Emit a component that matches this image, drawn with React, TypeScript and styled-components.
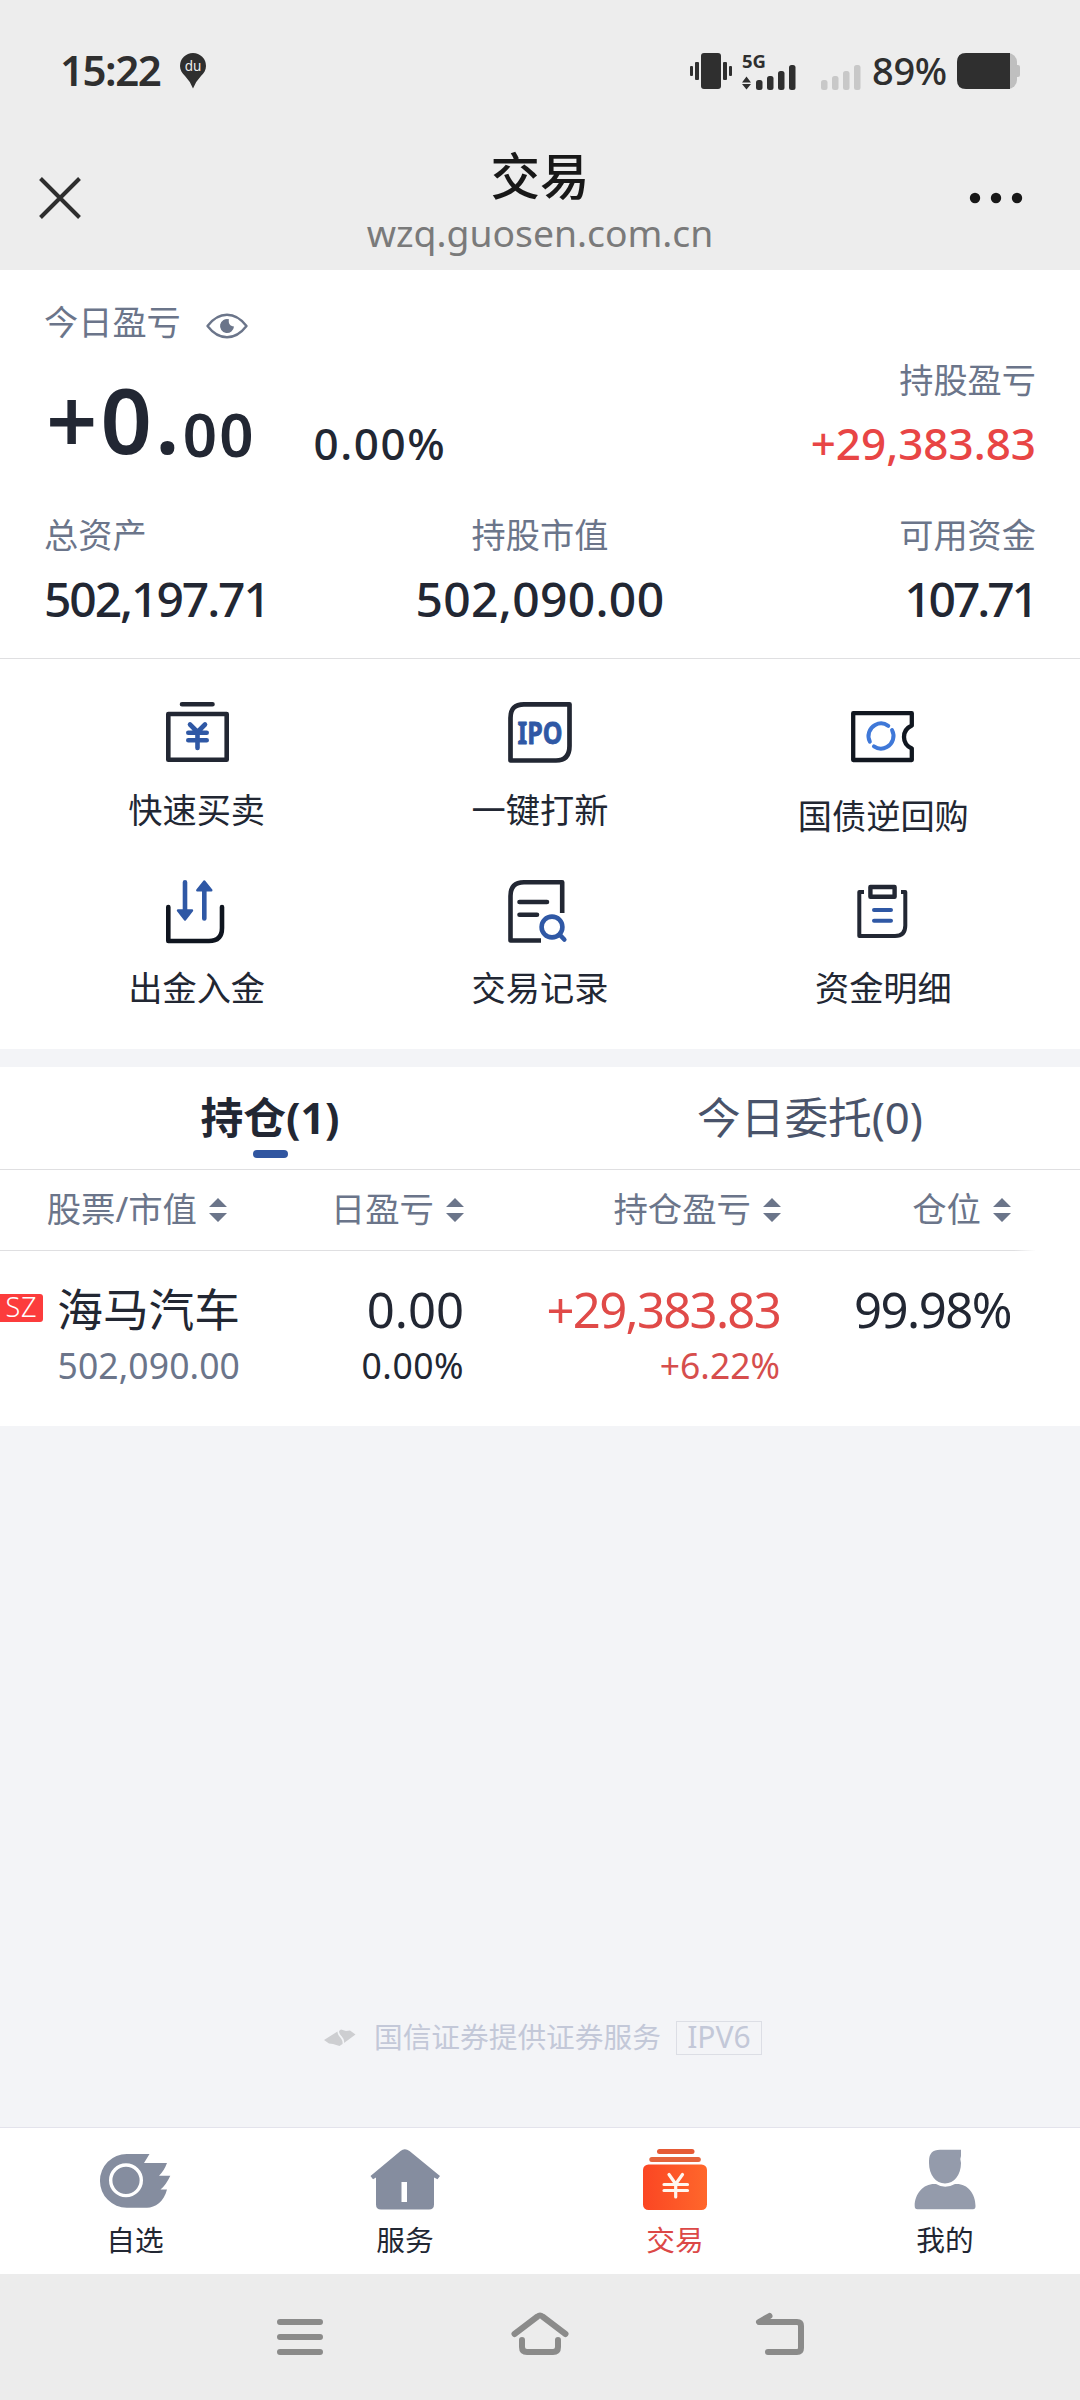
import styled, { createGlobalStyle } from "styled-components";
import type { ReactNode } from "react";

const INK = "#222733";
const MUTED = "#6b758a";
const BLUE = "#2f58a5";
const RED = "#e84545";
const GREY = "#858d9f";

const App = () => {
  return (
    <>
      <GlobalStyle />
      <Page>
        <StatusBar />
        <TitleBar>
          <CloseIcon />
          <TitleBox>
            <Title>交易</Title>
            <Url>wzq.guosen.com.cn</Url>
          </TitleBox>
          <MoreIcon />
        </TitleBar>

        <Summary>
          <TodayLabel>
            今日盈亏
            <EyeIcon />
          </TodayLabel>
          <ProfitRow>
            <BigProfit>+0.</BigProfit>
            <SmallProfit>00</SmallProfit>
            <Percent>0.00%</Percent>
            <HoldProfit>
              <Label>持股盈亏</Label>
              <RedValue>+29,383.83</RedValue>
            </HoldProfit>
          </ProfitRow>
          <AssetRow>
            {assets.map((item) => (
              <Asset key={item.label} $align={item.align}>
                <Label>{item.label}</Label>
                <AssetValue $spacing={item.spacing}>{item.value}</AssetValue>
              </Asset>
            ))}
          </AssetRow>
        </Summary>

        <Shortcuts>
          {shortcuts.map((item) => (
            <Shortcut key={item.label}>
              <svg width="64" height="64" viewBox="0 0 64 64" fill="none">
                {item.icon}
              </svg>
              <ShortcutLabel $low={item.low}>{item.label}</ShortcutLabel>
            </Shortcut>
          ))}
        </Shortcuts>

        <Holdings>
          <Tabs>
            <Tab $active>持仓(1)</Tab>
            <Tab>今日委托(0)</Tab>
          </Tabs>
          <TableHead>
            {columns.map((name) => (
              <HeadCell key={name}>
                {name}
                <SortIcon />
              </HeadCell>
            ))}
          </TableHead>
          <TableRow>
            <StockCell>
              <Market>SZ</Market>
              <StockText>
                <StockName>海马汽车</StockName>
                <CellSub $color={MUTED} $spacing={0.1}>502,090.00</CellSub>
              </StockText>
            </StockCell>
            <Cell>
              <CellMain>0.00</CellMain>
              <CellSub $spacing={0.5}>0.00%</CellSub>
            </Cell>
            <Cell>
              <CellMain $color="#e04a48" $spacing={-1.7}>+29,383.83</CellMain>
              <CellSub $color="#d64e4d">+6.22%</CellSub>
            </Cell>
            <Cell>
              <CellMain $spacing={-1.5}>99.98%</CellMain>
            </Cell>
          </TableRow>
        </Holdings>

        <Provider>
          <svg width="32" height="18" viewBox="0 0 32 18" fill="#cdced1">
            <path d="M0 11 13.500 2.500C13.500 8 19.500 9 18.500 15L15.500 17 9 15 5 14.500Z" />
            <path d="M15 2 17 .5 22 2 26 1.500 31.500 5.500 20 14C21 8 15 7 15 2Z" />
          </svg>
          <ProviderText>国信证券提供证券服务</ProviderText>
          <Ipv6>IPV6</Ipv6>
        </Provider>

        <TabBar>
          {tabBar.map((item) => (
            <TabItem key={item.label} $active={item.active}>
              <svg width="72" height="64" viewBox="0 0 72 64" fill="none">
                {item.icon}
              </svg>
              {item.label}
            </TabItem>
          ))}
        </TabBar>

        <SystemNav>
          <svg width="60" height="48" viewBox="0 0 60 48">
            <path d="M10 9H50M10 24H50M10 39H50" />
          </svg>
          <svg width="60" height="48" viewBox="0 0 60 48">
            <path d="M4.500 21 27.500 3.500Q30 1.500 32.500 3.500L55.500 21M12 27V34Q12 39 17 39H43Q48 39 48 34V27" />
          </svg>
          <svg width="60" height="48" viewBox="0 0 60 48">
            <path d="M19.500 3 9 9H47Q51 9 51 13V35Q51 39 47 39H18" />
          </svg>
        </SystemNav>
      </Page>
    </>
  );
};

const StatusBar = () => (
  <Status>
    <Time>15:22</Time>
    <svg width="28" height="37" viewBox="0 0 28 37">
      <path d="M14 1A13 13 0 0 1 27 14C27 18 25 21 22 24Q17 29 14 36.500 11 29 6 24C3 21 1 18 1 14A13 13 0 0 1 14 1Z" fill="#2f2f2f" />
      <text x="14" y="18.500" textAnchor="middle" fontSize="13.500" fill="#ededed">
        du
      </text>
    </svg>
    <StatusIcons>
      <svg width="42" height="38" viewBox="0 0 42 38">
        <rect x="0" y="14" width="3" height="10" rx="1" />
        <rect x="5" y="10" width="4" height="18" rx="1" />
        <rect x="11" y="1" width="20" height="36" rx="3" />
        <rect x="33" y="10" width="4" height="18" rx="1" />
        <rect x="39" y="14" width="3" height="10" rx="1" />
      </svg>
      <Network>
        <NetworkType>5G</NetworkType>
        <svg width="44" height="26" viewBox="0 0 44 26">
          <path d="M4.500 12.500 9 18.500H0ZM4.500 25.500 0 20H9Z" />
          <SignalBars />
        </svg>
      </Network>
      <NoSignal>
        <svg width="44" height="26" viewBox="0 0 44 26">
          <SignalBars />
        </svg>
      </NoSignal>
      <BatteryText>89%</BatteryText>
      <svg width="64" height="38" viewBox="0 0 64 38">
        <rect x="0" y="1" width="60" height="36" rx="9" fill="#bfbfbf" />
        <rect x="58" y="13" width="5" height="12" rx="2" fill="#bfbfbf" />
        <path d="M9 1H53V37H9Q0 37 0 28V10Q0 1 9 1Z" />
      </svg>
    </StatusIcons>
  </Status>
);

const SignalBars = () => (
  <g>
    <rect x="14" y="16" width="6.500" height="10" rx="2.500" />
    <rect x="25" y="12" width="6.500" height="14" rx="2.500" />
    <rect x="36" y="7" width="6.500" height="19" rx="2.500" />
    <rect x="47" y="1" width="6.500" height="25" rx="2.500" />
  </g>
);

const CloseIcon = () => (
  <svg width="44" height="44" viewBox="0 0 44 44">
    <path d="M2.500 1.500 41.500 40.500M41.500 1.500 2.500 40.500" stroke="#2e2e2e" strokeWidth="4" />
  </svg>
);

const MoreIcon = () => (
  <svg width="54" height="14" viewBox="0 0 54 14" fill="#181818">
    <circle cx="6" cy="6" r="5.200" />
    <circle cx="27" cy="6" r="5.200" />
    <circle cx="48" cy="6" r="5.200" />
  </svg>
);

const EyeIcon = () => (
  <svg width="42" height="26" viewBox="0 0 42 26">
    <path
      d="M1.500 13C13-2 29-2 40.500 13 29 28 13 28 1.500 13Z"
      fill="none"
      stroke={MUTED}
      strokeWidth="2.400"
      strokeLinejoin="round"
    />
    <path d="M23 6.300C22 10 24 13.500 28 13.500A7 7 0 1 1 23 6.300Z" fill={MUTED} />
  </svg>
);

const SortIcon = () => (
  <svg width="18" height="24" viewBox="0 0 18 24" fill={MUTED}>
    <path d="M9 0 18 9H0ZM9 24 0 15H18Z" />
  </svg>
);

const assets = [
  { label: "总资产", value: "502,197.71", align: "flex-start", spacing: -2.1 },
  { label: "持股市值", value: "502,090.00", align: "center", spacing: 0.3 },
  { label: "可用资金", value: "107.71", align: "flex-end", spacing: -3.1 },
];

const shortcuts: { label: string; icon: ReactNode; low?: boolean }[] = [
  {
    label: "快速买卖",
    icon: (
      <g strokeWidth="4.600" strokeLinecap="round" strokeLinejoin="round">
        <path d="M17 3.300H47.500M3.300 13H61.700V58.700H3.300Z" stroke={INK} />
        <path d="M25 23.500 32.500 31 40 23.500M32.500 31V47M23.300 31.700H41.700M23.300 39.200H41.700" stroke={BLUE} />
      </g>
    ),
  },
  {
    label: "一键打新",
    icon: (
      <>
        <path
          d="M16 3.300H61.500V45Q61.500 59.500 48 59.500H2.500V17Q2.500 3.300 16 3.300Z"
          stroke={INK}
          strokeWidth="4.700"
          strokeLinejoin="round"
        />
        <text
          x="9.500"
          y="42.500"
          fontSize="30"
          fontWeight="700"
          fill={BLUE}
          stroke={BLUE}
          strokeWidth=".8"
          strokeLinejoin="round"
          textLength="45"
          lengthAdjust="spacingAndGlyphs"
        >
          IPO
        </text>
      </>
    ),
  },
  {
    label: "国债逆回购",
    low: true,
    icon: (
      <>
        <path
          d="M2.200 12.200H60.800V24.500Q53 28 53 36 53 44 60.800 47.500V59H2.200Z"
          stroke="#111720"
          strokeWidth="4.300"
          strokeLinejoin="round"
        />
        <circle
          cx="30"
          cy="35"
          r="12.500"
          stroke="#3f78d8"
          strokeWidth="4"
          strokeLinecap="round"
          strokeDasharray="33 6.270"
          transform="rotate(-28 30 35)"
        />
      </>
    ),
  },
  {
    label: "出金入金",
    icon: (
      <>
        <path
          d="M3.300 28V62H44Q57 62 57 49V28"
          stroke="#0f151f"
          strokeWidth="4.600"
          strokeLinecap="round"
          strokeLinejoin="round"
        />
        <g stroke={BLUE} strokeLinecap="round" strokeLinejoin="round" fill={BLUE}>
          <path d="M20 3.300V36M39.300 10V39.500" strokeWidth="4.600" />
          <path d="M13 31.500H27L20 40.500ZM32.300 11.300H46.300L39.300 2.500Z" strokeWidth="2.400" />
        </g>
      </>
    ),
  },
  {
    label: "交易记录",
    icon: (
      <g strokeWidth="4.600">
        <path d="M33 61.500H2.500V17Q2.500 3.300 16 3.300H54.200V34" stroke={INK} strokeLinejoin="round" />
        <path d="M11.500 23H39M11.500 35.700H29" stroke={INK} strokeLinecap="round" />
        <circle cx="44" cy="48" r="10.400" stroke={BLUE} />
        <path d="M51.500 55.500 56.300 60.500" stroke={BLUE} strokeLinecap="round" />
      </g>
    ),
  },
  {
    label: "资金明细",
    icon: (
      <g strokeLinejoin="round">
        <path d="M13 13H8.300V57H44Q54.300 57 54.300 46.500V13H50" stroke={INK} strokeWidth="4" />
        <rect x="19.400" y="8" width="24.200" height="9.800" stroke={INK} strokeWidth="4.400" />
        <path d="M23 31H40M23 41.700H40" stroke={BLUE} strokeWidth="4" strokeLinecap="round" />
      </g>
    ),
  },
];

const columns = ["股票/市值", "日盈亏", "持仓盈亏", "仓位"];

const tabBar: { label: string; icon: ReactNode; active?: boolean }[] = [
  {
    label: "自选",
    icon: (
      <>
        <path
          d="M27.800 6H50.500L45 15H68Q65 23 60 27.700H71.300Q67 37 61.500 41.500H68C65 54 56 59.700 48 59.700H27.800A26.800 26.800 0 0 1 27.800 6Z"
          fill={GREY}
        />
        <circle cx="27" cy="32.300" r="15.300" stroke="#fff" strokeWidth="3.400" />
      </>
    ),
  },
  {
    label: "服务",
    icon: (
      <>
        <path
          d="M31.500 3Q35.700-.5 40.500 3L71 28 68.500 31.300 65 29.500V56.500Q65 61.500 60 61.500H12Q7 61.500 7 56.500V29.500L4 31.300 1.500 28Z"
          fill={GREY}
        />
        <rect x="32.500" y="34" width="5.500" height="20" fill="#fff" />
      </>
    ),
  },
  {
    label: "交易",
    active: true,
    icon: (
      <>
        <defs>
          <linearGradient id="card" x1="0" x2="1" y1="0" y2="0">
            <stop offset="0" stopColor="#fb4623" />
            <stop offset="1" stopColor="#ff672b" />
          </linearGradient>
        </defs>
        <rect x="18" y="1" width="37.500" height="5" rx="2.500" fill="#e65a35" />
        <rect x="10.300" y="9" width="51.500" height="5" rx="2.500" fill="#e4633c" />
        <rect x="4" y="16.500" width="64" height="45.500" rx="5.500" fill="url(#card)" />
        <path
          d="M30 26.500 36.700 36 43.500 26.500M36.700 36V49M25 36.500H48.500M25 42.500H48.500"
          stroke="#fff6ee"
          strokeWidth="3.200"
          strokeLinecap="round"
        />
      </>
    ),
  },
  {
    label: "我的",
    icon: (
      <g fill="#949bab">
        <path d="M31 1.700H52V8L51.300 11 52 15C52 27 45 35.500 36 35.500S20 27 20 15V13Q20 1.700 31 1.700Z" />
        <path d="M27 36Q36 41.500 46 36C58 35 66.500 45 66.500 58Q66.500 61.300 64 61.300H8.500Q5.700 61.300 5.700 58C5.700 45 15 35 27 36Z" />
      </g>
    ),
  },
];

const GlobalStyle = createGlobalStyle`
  * {
    box-sizing: border-box;
  }
  body {
    margin: 0;
    font-family: "Noto Sans", "Noto Sans CJK SC", sans-serif;
    color: ${INK};
  }
  svg {
    display: block;
    flex-shrink: 0;
    overflow: visible;
  }
`;

const Page = styled.div`
  width: 1080px;
  height: 2400px;
  display: flex;
  flex-direction: column;
  background: #f3f4f7;
  overflow: hidden;
`;

const Status = styled.div`
  height: 128px;
  padding: 52px 59px 0 60px;
  display: flex;
  background: #ededed;
`;

const Time = styled.div`
  width: 119px;
  font-size: 42px;
  line-height: 36px;
  font-weight: 600;
  letter-spacing: -1.5px;
  color: #2f2f2f;
`;

const StatusIcons = styled.div`
  margin-left: auto;
  height: 38px;
  display: flex;
  fill: #2f2f2f;
  color: #2f2f2f;
`;

const Network = styled.div`
  width: 65px;
  margin-left: 10px;
`;

const NetworkType = styled.div`
  height: 12px;
  font-size: 18.5px;
  line-height: 18px;
  font-weight: 700;
`;

const NoSignal = styled.div`
  width: 65px;
  padding-top: 12px;
  fill: #c8c8c8;
`;

const BatteryText = styled.div`
  width: 85px;
  font-size: 38px;
  line-height: 36px;
  font-weight: 500;
  letter-spacing: -0.3px;
  white-space: nowrap;
`;

const TitleBar = styled.div`
  height: 142px;
  padding: 0 57px 0 38px;
  display: grid;
  grid-template-columns: 54px 1fr 54px;
  align-items: center;
  background: #ededed;
`;

const TitleBox = styled.div`
  text-align: center;
  padding: 8px 0 0 19px;
`;

const Title = styled.div`
  font-size: 49.5px;
  line-height: 60px;
  font-weight: 500;
  color: #181818;
`;

const Url = styled.div`
  font-size: 37.3px;
  line-height: 54px;
  color: #7a7a7a;
`;

const Summary = styled.section`
  height: 389px;
  padding: 27px 44px 0;
  background: #fff;
  border-bottom: 1px solid #dfdfe1;
`;

const Label = styled.div`
  font-size: 34.2px;
  line-height: 50px;
  color: ${MUTED};
`;

const TodayLabel = styled(Label)`
  display: flex;
  align-items: center;
  gap: 25px;

  svg {
    margin-top: 8px;
  }
`;

const ProfitRow = styled.div`
  height: 163px;
  display: flex;
`;

const BigProfit = styled.div`
  font-size: 90px;
  line-height: 110px;
  font-weight: 600;
  letter-spacing: 3px;
  margin: 17px 0 0 2px;
`;

const SmallProfit = styled.div`
  font-size: 60px;
  line-height: 70px;
  font-weight: 600;
  letter-spacing: 2px;
  margin-top: 52px;
`;

const Percent = styled.div`
  font-size: 44px;
  line-height: 60px;
  font-weight: 500;
  letter-spacing: 1.6px;
  margin: 66px 0 0 58px;
`;

const HoldProfit = styled.div`
  margin: 8px 0 0 auto;
  display: flex;
  flex-direction: column;
  align-items: flex-end;
`;

const RedValue = styled.div`
  font-size: 44px;
  line-height: 60px;
  font-weight: 500;
  color: ${RED};
  margin-top: 8px;
`;

const AssetRow = styled.div`
  display: grid;
  grid-template-columns: repeat(3, 1fr);
`;

const Asset = styled.div<{ $align: string }>`
  display: flex;
  flex-direction: column;
  align-items: ${({ $align }) => $align};
`;

const AssetValue = styled.div<{ $spacing: number }>`
  font-size: 48px;
  line-height: 60px;
  font-weight: 500;
  letter-spacing: ${({ $spacing }) => $spacing}px;
  margin-top: 9px;
`;

const Shortcuts = styled.section`
  height: 390px;
  padding: 42px 25px 0;
  display: grid;
  grid-template-columns: repeat(3, 1fr);
  grid-auto-rows: 178px;
  background: #fff;
`;

const Shortcut = styled.div`
  display: flex;
  flex-direction: column;
  align-items: center;
`;

const ShortcutLabel = styled.div<{ $low?: boolean }>`
  font-size: 34.2px;
  line-height: 50px;
  margin-top: ${({ $low }) => ($low ? 26 : 20)}px;
`;

const Holdings = styled.section`
  height: 359px;
  margin-top: 18px;
  background: #fff;
`;

const Tabs = styled.div`
  height: 103px;
  display: flex;
  border-bottom: 1px solid #dfdfe1;
`;

const Tab = styled.div<{ $active?: boolean }>`
  flex: 1;
  padding-top: 20px;
  display: flex;
  flex-direction: column;
  align-items: center;
  font-size: ${({ $active }) => ($active ? 42.8 : 43.7)}px;
  line-height: 61px;
  font-weight: ${({ $active }) => ($active ? 700 : 400)};
  color: ${({ $active }) => ($active ? INK : "#49536a")};

  &::after {
    content: "";
    width: 35px;
    height: 8px;
    margin-top: 2px;
    border-radius: 4px;
    background: ${({ $active }) => ($active ? "#3156a0" : "transparent")};
  }
`;

const TableHead = styled.div`
  height: 81px;
  padding: 0 0 3px 45px;
  display: grid;
  grid-template-columns: 182px 237px 317px 230px;
  align-items: center;
  background: linear-gradient(90deg, #dfdfe1 1014px, #fff 1036px) bottom / 100% 1px no-repeat;
`;

const HeadCell = styled.div`
  display: flex;
  align-items: center;
  justify-content: flex-end;
  gap: 12px;
  font-size: 34.4px;
  line-height: 50px;
  white-space: nowrap;
  color: ${MUTED};

  svg {
    margin-top: 2px;
  }
`;

const TableRow = styled.div`
  padding-top: 28px;
  display: grid;
  grid-template-columns: 240px 224px 316px 231px;
`;

const StockCell = styled.div`
  display: flex;
`;

const Market = styled.div`
  width: 43px;
  height: 28px;
  margin-top: 15px;
  border-radius: 0 3px 3px 0;
  background: #fc3c3c;
  color: #fff;
  font-size: 27px;
  line-height: 26px;
  font-weight: 300;
  letter-spacing: 0.8px;
  text-align: center;
`;

const StockText = styled.div`
  margin-left: auto;
  display: flex;
  flex-direction: column;
  align-items: flex-end;
`;

const StockName = styled.div`
  font-size: 45.7px;
  line-height: 61px;
`;

const Cell = styled.div`
  display: flex;
  flex-direction: column;
  align-items: flex-end;
`;

const CellMain = styled.div<{ $color?: string; $spacing?: number }>`
  font-size: 49px;
  line-height: 61px;
  letter-spacing: ${({ $spacing = 0 }) => $spacing}px;
  color: ${({ $color = INK }) => $color};
`;

const CellSub = styled.div<{ $color?: string; $spacing?: number }>`
  font-size: 35.5px;
  line-height: 51px;
  letter-spacing: ${({ $spacing = 0 }) => $spacing}px;
  color: ${({ $color = INK }) => $color};
`;

const Provider = styled.div`
  margin-top: auto;
  height: 34px;
  margin-bottom: 72px;
  padding-left: 324px;
  display: flex;
  align-items: center;
`;

const ProviderText = styled.div`
  margin: 0 0 3px 18px;
  font-size: 28.7px;
  line-height: 34px;
  color: #c3c8d8;
`;

const Ipv6 = styled.div`
  width: 86px;
  height: 34px;
  margin-left: 15px;
  border: 1px solid #dcdee5;
  font-size: 30px;
  line-height: 30px;
  text-align: center;
  color: #c3c8d8;
`;

const TabBar = styled.nav`
  height: 147px;
  border-top: 1px solid #e3e3ec;
  display: flex;
  background: #fff;
`;

const TabItem = styled.div<{ $active?: boolean }>`
  flex: 1;
  padding-top: 20px;
  display: flex;
  flex-direction: column;
  align-items: center;
  gap: 8px;
  font-size: 28.7px;
  line-height: 40px;
  color: ${({ $active }) => ($active ? "#dc4847" : INK)};
`;

const SystemNav = styled.div`
  height: 126px;
  padding: 39px 270px 0;
  display: flex;
  justify-content: space-between;
  background: #ececec;

  path {
    fill: none;
    stroke: #8b8b8a;
    stroke-width: 6;
    stroke-linecap: round;
    stroke-linejoin: round;
  }
`;

export default App;
